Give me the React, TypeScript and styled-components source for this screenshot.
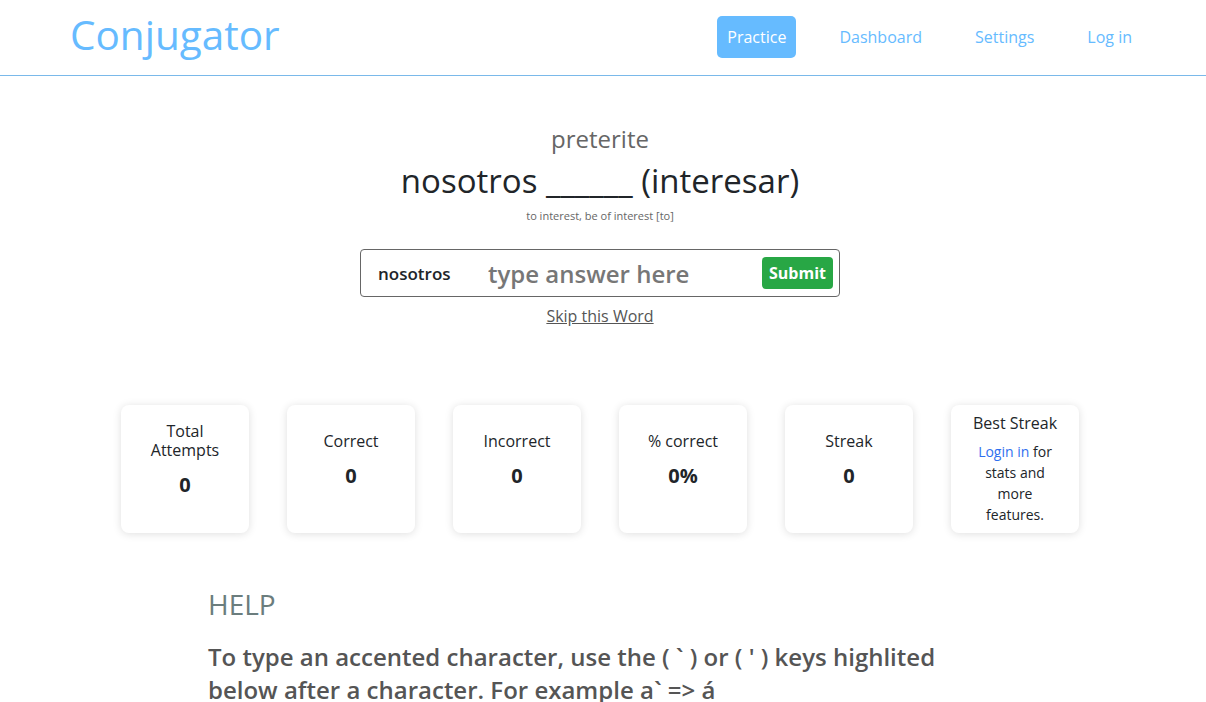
import React from 'react';
import styled, { createGlobalStyle } from 'styled-components';

const GlobalStyle = createGlobalStyle`
  body {
    margin: 0;
    font-family: "Open Sans", "Noto Sans", sans-serif;
    color: #212529;
    background: #fff;
  }
  * {
    box-sizing: border-box;
  }
`;

const Header = styled.header`
  height: 76px;
  display: flex;
  align-items: center;
  justify-content: space-between;
  padding: 0 64px 0 70px;
  border-bottom: 1px solid #7ab9ea;
`;

const Logo = styled.div`
  font-size: 40.5px;
  color: #66bbff;
  margin-top: -6px;
`;

const Nav = styled.nav`
  display: flex;
  gap: 33px;
  margin-top: -2px;
`;

const NavLink = styled.a<{ active?: boolean }>`
  font-size: 16px;
  padding: 10px 10px;
  border-radius: 5px;
  color: ${(p) => (p.active ? '#fff' : '#66bbff')};
  background: ${(p) => (p.active ? '#66bbff' : 'transparent')};
  text-decoration: none;
  cursor: pointer;
`;

const Main = styled.main`
  display: flex;
  flex-direction: column;
  align-items: center;
  padding: 46px 6px 0 0;
`;

const Tense = styled.div`
  font-size: 24px;
  line-height: 33px;
  color: #666;
`;

const Prompt = styled.div`
  font-size: 33px;
  line-height: 44px;
  margin-top: 4px;
  color: #212529;
`;

const Definition = styled.div`
  font-size: 11px;
  line-height: 15px;
  margin-top: 5px;
  color: #666;
`;

const AnswerBox = styled.form`
  width: 480px;
  height: 48px;
  margin-top: 26px;
  border: 1px solid #666;
  border-radius: 4px;
  display: flex;
  align-items: center;
  padding: 0 6px 0 17px;
`;

const Pronoun = styled.span`
  flex: none;
  width: 110px;
  font-size: 17px;
  font-weight: 600;
  color: #212529;
`;

const AnswerInput = styled.input`
  flex: 1;
  min-width: 0;
  border: none;
  outline: none;
  font-family: inherit;
  font-size: 24px;
  font-weight: 600;
  color: #212529;
  background: transparent;
  padding: 0;
  &::placeholder {
    color: #777;
  }
`;

const SubmitButton = styled.button`
  flex: none;
  background: #28a745;
  color: #fff;
  border: none;
  border-radius: 4px;
  font-family: inherit;
  font-size: 16px;
  font-weight: 700;
  height: 32px;
  padding: 0 7px;
  cursor: pointer;
`;

const SkipLink = styled.a`
  margin-top: 8px;
  font-size: 16px;
  line-height: 22px;
  color: #555;
  text-decoration: underline;
  cursor: pointer;
`;

const StatsRow = styled.section`
  display: flex;
  gap: 38px;
  margin-top: 78px;
`;

const StatCard = styled.div`
  width: 128px;
  height: 128px;
  border-radius: 8px;
  background: #fff;
  box-shadow: 0 1px 9px rgba(0, 0, 0, 0.13);
  display: flex;
  flex-direction: column;
  align-items: center;
  justify-content: center;
  padding: 0 18px;
  text-align: center;
`;

const StatTitle = styled.div`
  font-size: 16px;
  line-height: 19px;
`;

const StatValue = styled.div`
  font-size: 20px;
  font-weight: 700;
  line-height: 27px;
  margin-top: 11px;
  margin-bottom: 18px;
`;

const StatNote = styled.div`
  font-size: 14px;
  line-height: 21px;
  margin-top: 8px;
  & a {
    color: #2f6fef;
    text-decoration: none;
  }
`;

const Help = styled.section`
  width: 790px;
  margin: 52px auto 0;
`;

const HelpTitle = styled.h2`
  margin: 0;
  font-size: 28px;
  line-height: 38px;
  font-weight: 500;
  color: #6b7d7d;
`;

const HelpText = styled.p`
  margin: 17px 0 0;
  font-size: 24px;
  line-height: 33px;
  font-weight: 600;
  color: #555;
`;

const stats = [
  { title: 'Total Attempts', value: '0' },
  { title: 'Correct', value: '0' },
  { title: 'Incorrect', value: '0' },
  { title: '% correct', value: '0%' },
  { title: 'Streak', value: '0' },
];

function App() {
  return (
    <>
      <GlobalStyle />
      <Header>
        <Logo>Conjugator</Logo>
        <Nav>
          <NavLink active>Practice</NavLink>
          <NavLink>Dashboard</NavLink>
          <NavLink>Settings</NavLink>
          <NavLink>Log in</NavLink>
        </Nav>
      </Header>
      <Main>
        <Tense>preterite</Tense>
        <Prompt>nosotros ______ (interesar)</Prompt>
        <Definition>to interest, be of interest [to]</Definition>
        <AnswerBox onSubmit={(e) => e.preventDefault()}>
          <Pronoun>nosotros</Pronoun>
          <AnswerInput placeholder="type answer here" />
          <SubmitButton type="submit">Submit</SubmitButton>
        </AnswerBox>
        <SkipLink>Skip this Word</SkipLink>
        <StatsRow>
          {stats.map((s) => (
            <StatCard key={s.title}>
              <StatTitle>{s.title}</StatTitle>
              <StatValue>{s.value}</StatValue>
            </StatCard>
          ))}
          <StatCard>
            <StatTitle>Best Streak</StatTitle>
            <StatNote>
              <a>Login in</a> for stats and more features.
            </StatNote>
          </StatCard>
        </StatsRow>
      </Main>
      <Help>
        <HelpTitle>HELP</HelpTitle>
        <HelpText>
          To type an accented character, use the ( ` ) or ( ' ) keys highlited below after a
          character. For example a` =&gt; á
        </HelpText>
      </Help>
    </>
  );
}

export default App;
